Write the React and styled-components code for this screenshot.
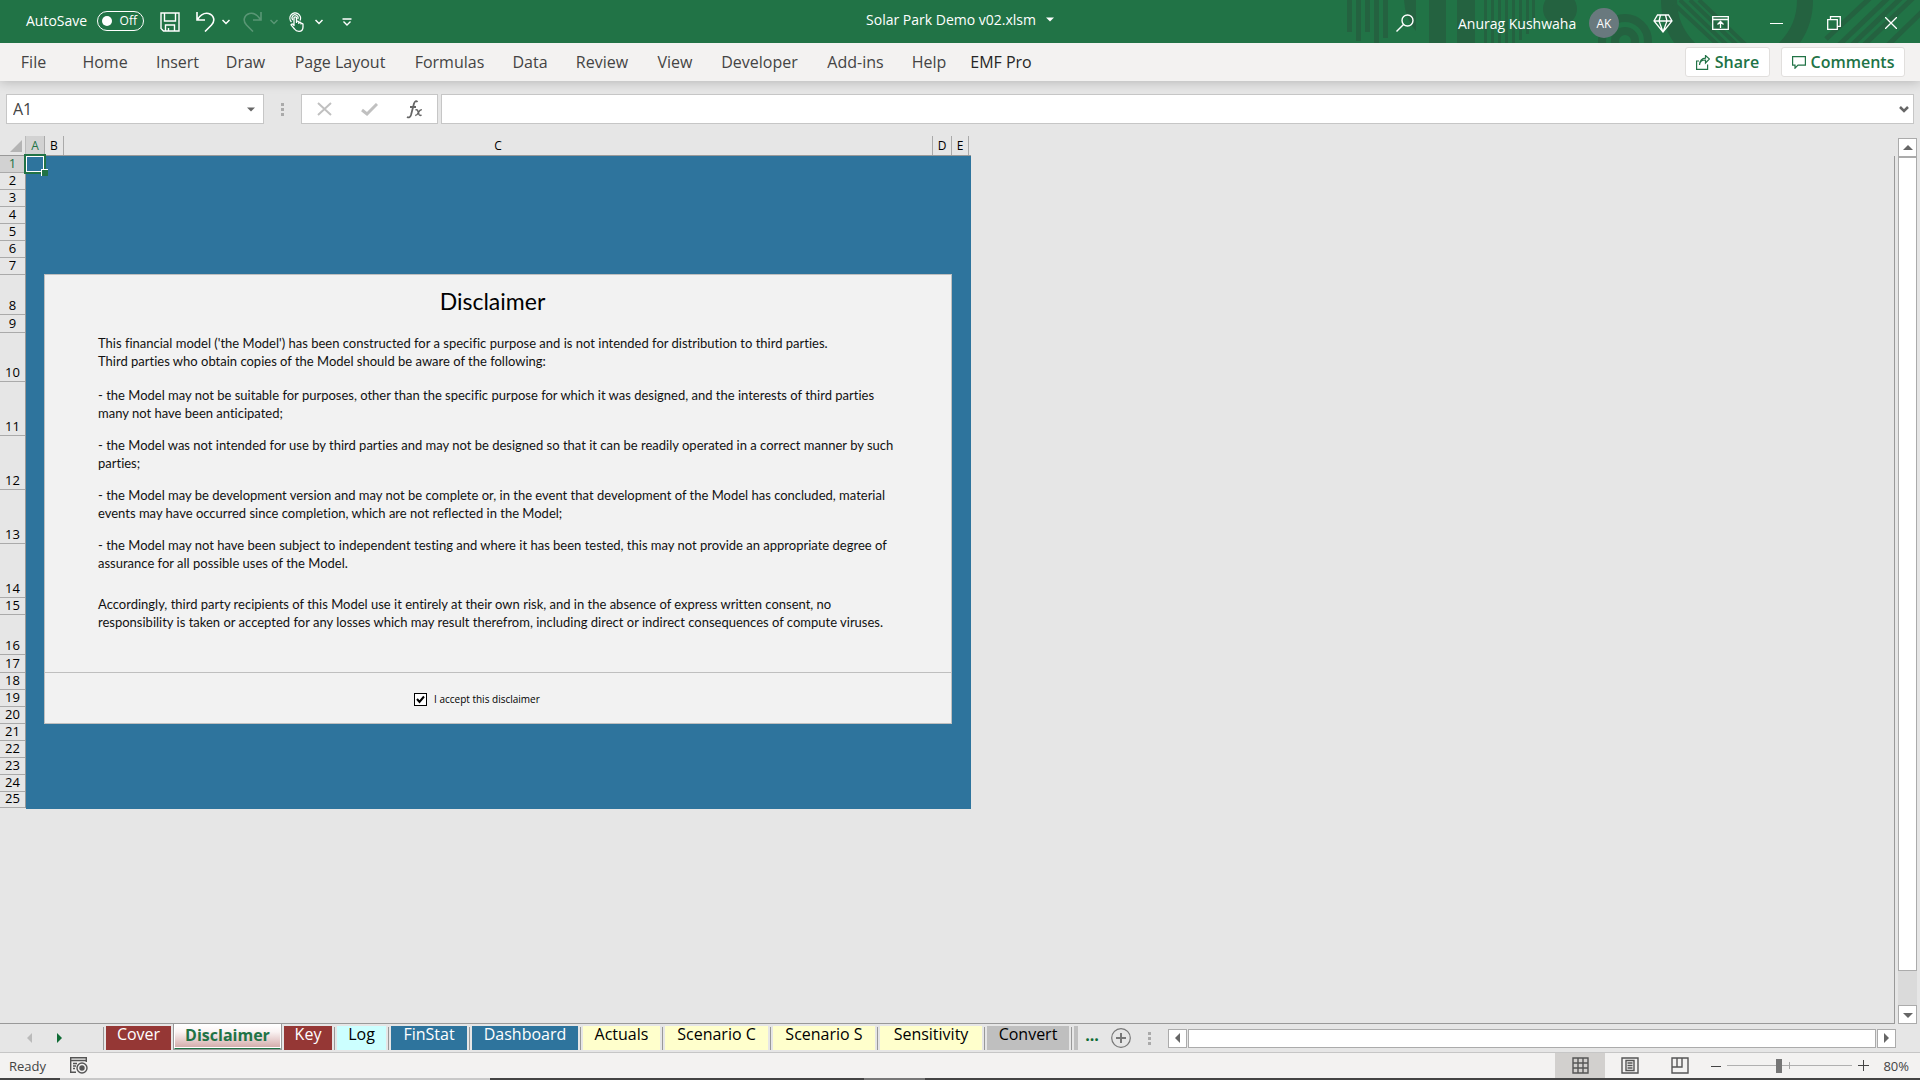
import React from 'react';
import styled, { createGlobalStyle, css } from 'styled-components';

const GlobalStyle = createGlobalStyle`
  * {
    box-sizing: border-box;
  }

  body {
    margin: 0;
    background: #e6e6e6;
    font-family: "Open Sans", "Noto Sans", sans-serif;
    color: #444;
  }

  button, input {
    font: inherit;
    color: inherit;
    margin: 0;
  }

  button {
    padding: 0;
    border: 0;
    background: none;
  }

  svg {
    display: block;
    flex: none;
  }
`;

const Page = styled.div`
  min-height: 100vh;
  display: flex;
  flex-direction: column;
`;

/* title bar */

const TitleBar = styled.header`
  position: relative;
  height: 43px;
  padding-bottom: 9px;
  display: grid;
  grid-template-columns: 1fr auto 1fr;
  align-items: center;
  background: #217346;
  color: #fff;
  font-size: 14px;
`;

const Pattern = styled.svg`
  position: absolute;
  top: 0;
  right: 0;
`;

const QuickAccess = styled.div`
  display: flex;
  align-items: center;
  padding-left: 26px;
`;

const AutoSave = styled.label`
  display: flex;
  align-items: center;
  gap: 8px;
  width: 134px;
  padding-top: 3px;
  white-space: nowrap;
`;

const Toggle = styled.button`
  width: 47px;
  height: 20px;
  margin-left: auto;
  margin-right: 16px;
  padding: 0 6px 0 4px;
  display: flex;
  align-items: center;
  justify-content: space-between;
  border: 1px solid #fff;
  border-radius: 10px;
  font-size: 12px;
  line-height: 18px;

  &::before {
    content: '';
    width: 10px;
    height: 10px;
    border-radius: 50%;
    background: #fff;
  }
`;

const BarButton = styled.button`
  width: ${props => props.$width}px;
  height: 34px;
  padding-top: 6px;
  display: flex;
  align-items: center;
  opacity: ${props => (props.disabled ? 0.25 : 1)};
`;

const FileName = styled.button`
  display: flex;
  align-items: center;
  gap: 10px;
  white-space: nowrap;
`;

const WindowTools = styled.div`
  position: relative;
  display: flex;
  align-items: center;
  justify-content: flex-end;
  padding-top: 8px;
`;

const UserName = styled.span`
  width: 131px;
  white-space: nowrap;
`;

const Avatar = styled.span`
  width: 30px;
  height: 30px;
  margin-right: 13px;
  display: grid;
  place-items: center;
  border-radius: 50%;
  background: #69797e;
  font-size: 12px;
`;

const ToolButton = styled.button`
  width: ${props => props.$width}px;
  height: 30px;
  display: grid;
  place-items: center;
`;

/* ribbon */

const Ribbon = styled.nav`
  height: 38px;
  padding: 0 15px 0 5px;
  display: flex;
  align-items: center;
  background: #f3f2f1;
  box-shadow: 0 1px 12px rgba(0, 0, 0, 0.22);
  font-size: 16px;
`;

const RibbonTab = styled.button`
  width: ${props => props.$width}px;
  height: 38px;
  white-space: nowrap;
  color: ${props => (props.$dark ? '#262626' : '#444')};
`;

const RibbonActions = styled.div`
  margin-left: auto;
  display: flex;
  gap: 11px;
`;

const ActionButton = styled.button`
  width: ${props => props.$width}px;
  height: 30px;
  display: flex;
  align-items: center;
  justify-content: center;
  gap: 5px;
  background: #fff;
  border: 1px solid #e1dfdd;
  border-radius: 3px;
  color: #217346;
  font-weight: 600;
`;

/* formula bar */

const FormulaBar = styled.div`
  height: 55px;
  padding: 13px 6px 0 6px;
  display: flex;
  align-items: flex-start;
`;

const box = css`
  height: 30px;
  display: flex;
  align-items: center;
  background: #fff;
  border: 1px solid #c6c6c6;
`;

const NameBox = styled.div`
  ${box}
  width: 258px;
  padding-right: 8px;
`;

const NameInput = styled.input`
  flex: 1;
  min-width: 0;
  padding: 0 6px;
  border: 0;
  outline: 0;
  background: none;
  font-size: 16px;
`;

const Grip = styled.div`
  width: 37px;
  height: 30px;
  display: grid;
  place-items: center;
`;

const FormulaButtons = styled.div`
  ${box}
  width: 137px;
  margin-right: 3px;
`;

const FormulaButton = styled.button`
  flex: 1;
  height: 28px;
  display: grid;
  place-items: center;
`;

const FormulaField = styled.div`
  ${box}
  flex: 1;
  padding-right: 4px;
`;

/* sheet */

const Workspace = styled.main`
  flex: 1;
  display: flex;
`;

const Sheet = styled.div`
  flex: 1;
  display: flex;
  flex-direction: column;
`;

const ColumnHeads = styled.div`
  height: 20px;
  display: flex;
`;

const HeadTrack = styled.div`
  display: flex;
  border-bottom: 1px solid #999;
  padding-right: ${props => props.$end || 0}px;
`;

const Corner = styled.button`
  width: 26px;
  display: flex;
  align-items: flex-end;
  justify-content: flex-end;
  padding: 0 3px 3px 0;
  border-right: 1px solid #bbb;
`;

const ColumnHead = styled.div`
  width: ${props => props.$width}px;
  border-right: 1px solid #aaa;
  text-align: center;
  font-size: 12px;
  line-height: 19px;
  color: ${props => (props.$active ? '#217346' : '#000')};
  background: ${props => (props.$active ? '#d2d2d2' : 'none')};
`;

const SheetBody = styled.div`
  flex: 1;
  display: flex;
  align-items: flex-start;
  border-right: 1px solid #999;
  border-bottom: 1px solid #999;
`;

const RowHeads = styled.div`
  width: 26px;
  border-right: 1px solid #999;
`;

const RowHead = styled.div`
  height: ${props => props.$height}px;
  padding-bottom: 2px;
  display: flex;
  align-items: flex-end;
  justify-content: center;
  border-bottom: 1px solid #aaa;
  font-size: 13px;
  line-height: 14px;
  color: ${props => (props.$active ? '#217346' : '#000')};
  background: ${props => (props.$active ? '#d2d2d2' : 'none')};
`;

const Canvas = styled.div`
  position: relative;
  padding: 118px 19px 85px 18px;
  background: #2e749d;
`;

/* outline round the selected cell, lies over the grid lines */
const Selection = styled.div`
  position: absolute;
  top: -2px;
  left: -2px;
  width: 22px;
  height: 20px;
  border: 2px solid #217346;

  &::before {
    content: '';
    position: absolute;
    inset: 0;
    border: 1px solid #fff;
  }

  &::after {
    content: '';
    position: absolute;
    right: -4px;
    bottom: -4px;
    width: 6px;
    height: 6px;
    background: #217346;
    border-top: 1px solid #fff;
    border-left: 1px solid #fff;
  }
`;

const Panel = styled.section`
  width: 908px;
  border: 1px solid #bfbfbf;
  background: #f2f2f2;
  color: #000;
`;

const PanelText = styled.div`
  height: 398px;
  padding: 11px 64px 0 53px;
  border-bottom: 1px solid #bfbfbf;
  font-family: Lato, sans-serif;
  font-size: 13px;
  line-height: 18px;
  font-variant-ligatures: none;
  white-space: nowrap;
  color: #111;
`;

const PanelTitle = styled.h1`
  margin: 0 0 18px;
  text-align: center;
  font-size: 23px;
  font-weight: 400;
  line-height: 30px;
  color: #000;
`;

const Paragraph = styled.p`
  margin: 0 0 ${props => props.$after || 14}px;
`;

const PanelFooter = styled.div`
  height: 50px;
  padding: 3px 0 0 369px;
  display: flex;
  align-items: center;
`;

const Accept = styled.label`
  display: flex;
  align-items: center;
  gap: 7px;
  font-size: 10px;
  line-height: 13px;
`;

const CheckWrap = styled.span`
  display: grid;
  place-items: center;

  & > * {
    grid-area: 1 / 1;
  }

  svg {
    pointer-events: none;
  }
`;

const Check = styled.input`
  appearance: none;
  width: 13px;
  height: 13px;
  border: 1px solid #000;
  background: #fff;

  &:not(:checked) + svg {
    display: none;
  }
`;

/* scroll bars */

const VScroll = styled.div`
  width: 25px;
  padding: 2px 3px 0 3px;
  display: flex;
  flex-direction: column;
`;

const ScrollButton = styled.button`
  width: 19px;
  height: 19px;
  flex: none;
  display: grid;
  place-items: center;
  background: #fff;
  border: 1px solid #ababab;
`;

const VTrack = styled.div`
  flex: 1;
  padding-bottom: 34px;
  display: flex;
  background: #dadada;
`;

const Thumb = styled.div`
  flex: 1;
  background: #fff;
  border: 1px solid #ababab;
`;

const HScroll = styled.div`
  flex: 1;
  display: flex;
  gap: 1px;
  height: 19px;
`;

/* sheet tabs */

const TabBar = styled.div`
  height: 29px;
  padding-right: 24px;
  display: flex;
  align-items: center;
  border-bottom: 1px solid #c6c6c6;
`;

const TabArrows = styled.div`
  width: 101px;
  padding-left: 20px;
  display: flex;
  gap: 10px;
`;

const TabArrow = styled.button`
  width: 20px;
  height: 20px;
  display: grid;
  place-items: center;
`;

const Tabs = styled.div`
  align-self: stretch;
  display: flex;
  align-items: flex-start;
`;

const Divider = styled.span`
  width: 1px;
  height: 23px;
  margin: 3px 2px 0;
  background: #999;
`;

const Tab = styled.button`
  width: ${props => props.$width}px;
  height: 24px;
  margin-top: 2px;
  padding-bottom: 7px;
  white-space: nowrap;
  font-size: 16px;
  line-height: 17px;
  background: ${props => props.$fill};
  color: ${props => props.$color};

  ${props => props.$active && css`
    height: 27px;
    margin: -1px 2px 0;
    padding: 0 0 2px;
    border: solid #fff;
    border-width: 2px 2px 1px;
    border-bottom: 2px solid #217346;
    font-weight: 700;
    outline: 1px solid #999;
    outline-offset: -1px;
    clip-path: inset(1px 0 0 0);
    box-shadow: inset 0 -1px #fff;
  `}
`;

const MoreTabs = styled.button`
  width: 28px;
  height: 20px;
  margin-right: 5px;
  padding-bottom: 6px;
  color: #0f6b35;
  font-size: 16px;
  font-weight: 700;
  line-height: 14px;
`;

/* status bar */

const StatusBar = styled.footer`
  height: 25px;
  padding: 0 11px 0 9px;
  display: flex;
  align-items: center;
  background: #f3f2f1;
  font-size: 13px;
`;

const Ready = styled.span`
  width: 61px;
`;

const Views = styled.div`
  margin-left: auto;
  display: flex;
`;

const ViewButton = styled.button`
  width: 50px;
  height: 25px;
  display: grid;
  place-items: center;
  background: ${props => (props.$active ? '#d2d0ce' : 'none')};
`;

const ZoomButton = styled.button`
  width: 22px;
  height: 25px;
  display: grid;
  place-items: center;
`;

const ZoomSlider = styled.input`
  appearance: none;
  width: 125px;
  height: 15px;
  background:
    linear-gradient(#a6a6a6, #a6a6a6) center / 1px 7px no-repeat,
    linear-gradient(#b0b0b0, #b0b0b0) center / 100% 1px no-repeat;

  &::-webkit-slider-thumb {
    appearance: none;
    width: 6px;
    height: 14px;
    background: #767676;
  }
`;

const ZoomLevel = styled.span`
  width: 35px;
  text-align: right;
`;

const TaskEdge = styled.div`
  height: 2px;
  display: flex;
  background: #444;
`;

const TaskEdgePart = styled.span`
  width: ${props => props.$width}px;
  background: ${props => props.$fill};
`;

const ribbonTabs = [
  ['File', 57],
  ['Home', 86],
  ['Insert', 59],
  ['Draw', 77],
  ['Page Layout', 112],
  ['Formulas', 107],
  ['Data', 54],
  ['Review', 90],
  ['View', 56],
  ['Developer', 113],
  ['Add-ins', 79],
  ['Help', 68],
];

const columns = [
  ['A', 19],
  ['B', 19],
  ['C', 869],
  ['D', 19],
  ['E', 17],
];

const rowHeights = [
  17, 17, 17, 17, 17, 17, 17, 40, 18, 49, 54, 54, 54, 54, 17, 40, 18,
  17, 17, 17, 17, 17, 17, 17, 16,
];

const red = '#953735';
const blue = '#2e749d';
const yellow = '#ffffcc';

const sheetTabs = [
  { name: 'Cover', width: 65, fill: red, color: '#fff', plain: true },
  {
    name: 'Disclaimer',
    width: 109,
    fill: 'linear-gradient(#fff, #faf3f3 30%, #d3a9a8)',
    color: '#217346',
    active: true,
    plain: true,
  },
  { name: 'Key', width: 48, fill: red, color: '#fff' },
  { name: 'Log', width: 49, fill: '#ccffff', color: '#000' },
  { name: 'FinStat', width: 76, fill: blue, color: '#fff' },
  { name: 'Dashboard', width: 106, fill: blue, color: '#fff' },
  { name: 'Actuals', width: 77, fill: yellow, color: '#000' },
  { name: 'Scenario C', width: 103, fill: yellow, color: '#000' },
  { name: 'Scenario S', width: 102, fill: yellow, color: '#000' },
  { name: 'Sensitivity', width: 102, fill: yellow, color: '#000' },
  { name: 'Convert', width: 82, fill: '#bfbfbf', color: '#000' },
];

const arrows = {
  up: 'M0 6 5 1l5 5z',
  down: 'M0 2h10L5 7z',
  left: 'M7 0v10L2 5z',
  right: 'M2 0v10l5-5z',
};

const Arrow = ({ dir, color = '#666', size = 10 }) => (
  <svg width={size} height={size} viewBox={dir === 'up' || dir === 'down' ? '0 -1 10 10' : '0 0 10 10'}>
    <path d={arrows[dir]} fill={color} />
  </svg>
);

const Chevron = () => (
  <svg width="8" height="6" viewBox="0 0 8 6" fill="none" stroke="#fff" strokeWidth="1.5">
    <path d="M.5 1 4 4.5 7.5 1" />
  </svg>
);

const Dots = () => (
  <svg width="3" height="13" fill="#aaa">
    <path d="M0 0h3v3H0zM0 5h3v3H0zM0 10h3v3H0z" />
  </svg>
);

const TitlePattern = () => (
  <Pattern width="580" height="43" viewBox="1340 0 580 43" fill="#246240" aria-hidden="true">
    <path d="M1347 0h5v32h-5zM1356 0h5v41h-5zM1365 0h5v32h-5zM1374 0h5v43h-5zM1383 0h5v38h-5z" />
    <path d="M1404 0h12v31q-11-12-12-31z" />
    <path d="M1429 0h17v43h-17zM1457 0h18v43h-18z" />
    <path d="M1484 0h3v43h-3zM1491 0h3v43h-3zM1498 0h3v43h-3zM1505 0h3v43h-3zM1512 0h3v43h-3zM1519 0h3v40h-3zM1526 0h3v34h-3zM1532 0h3v20h-3z" />
    <circle cx="1560" cy="9" r="17" />
    <g fill="none" stroke="#246240">
      <circle cx="1625" cy="41" r="23" strokeWidth="8" />
      <circle cx="1625" cy="41" r="10" strokeWidth="8" />
      <circle cx="1737" cy="0" r="68" strokeWidth="16" />
      <path strokeWidth="4" d="M1674 4l46 43M1680 0l48 46M1690 0l48 46M1699 0l48 46" />
      <path strokeWidth="5" d="M1826 39l44-41M1839 45l50-48M1852 45l50-48M1864 45l50-48M1886 47l40-39" />
    </g>
  </Pattern>
);

const SaveIcon = () => (
  <svg width="20" height="20" viewBox="0 0 20 20" fill="none" stroke="#fff" strokeWidth="1.4">
    <path d="M1 1h18v18H3.5L1 16.5zM4.5 1v8h11V1M5.5 19v-6h9v6M8.5 19v-3" />
  </svg>
);

const UndoIcon = ({ flip }) => (
  <svg width="19" height="20" viewBox="0 0 19 20" fill="none" stroke="#fff" strokeWidth="1.6">
    <path
      transform={flip ? 'matrix(-1 0 0 1 19 0)' : undefined}
      d="M1 0v8h8M1.500 7.500C5 2 9 .8 12.500 1.500 18 3 19.500 9 15.500 13L9 19.500"
    />
  </svg>
);

const TouchIcon = () => (
  <svg width="15" height="20" viewBox="0 0 15 20" fill="none" stroke="#fff" strokeWidth="1.3">
    <path d="M2.500 10A5.300 5.300 0 1 1 11 8.500M4 8A3 3 0 1 1 8.800 7" />
    <path d="M5 14V5.500q1.300-1.300 2.500 0V11M7.500 9.500q1.500-.8 2.300.3V12M9.800 10.500q1.500-.6 2.200.4V12.500M12 11.500q1.500-.4 2 .6V15q0 4.300-4 4.300-3 0-4.500-2.300L2 12.800q.8-1.300 2-.5L5 13.300" />
  </svg>
);

const App = () => (
  <>
    <GlobalStyle />
    <Page>
      <TitleBar>
        <TitlePattern />
        <QuickAccess>
          <AutoSave>
            AutoSave
            <Toggle aria-label="AutoSave">Off</Toggle>
          </AutoSave>
          <BarButton $width={36} aria-label="Save"><SaveIcon /></BarButton>
          <BarButton $width={26} aria-label="Undo"><UndoIcon /></BarButton>
          <BarButton $width={21} aria-label="Undo list"><Chevron /></BarButton>
          <BarButton $width={27} aria-label="Redo" disabled><UndoIcon flip /></BarButton>
          <BarButton $width={19} aria-label="Redo list" disabled><Chevron /></BarButton>
          <BarButton $width={26} aria-label="Touch mode"><TouchIcon /></BarButton>
          <BarButton $width={27} aria-label="Touch mode list"><Chevron /></BarButton>
          <BarButton $width={20} aria-label="Customize toolbar">
            <svg width="10" height="8" viewBox="0 0 10 8" fill="none" stroke="#fff" strokeWidth="1.4">
              <path d="M.5 1h9M1.500 3.500 5 7l3.500-3.500" />
            </svg>
          </BarButton>
        </QuickAccess>
        <FileName>
          Solar Park Demo v02.xlsm
          <Arrow dir="down" color="#fff" size={8} />
        </FileName>
        <WindowTools>
          <ToolButton $width={106} aria-label="Search">
            <svg width="18" height="18" viewBox="0 0 18 18" fill="none" stroke="#fff" strokeWidth="1.4">
              <circle cx="11.500" cy="6.500" r="5.500" />
              <path d="M7.500 10.500.5 17.500" />
            </svg>
          </ToolButton>
          <UserName>Anurag Kushwaha</UserName>
          <Avatar>AK</Avatar>
          <ToolButton $width={62} aria-label="Premium">
            <svg width="20" height="19" viewBox="0 0 20 19" fill="none" stroke="#fff" strokeWidth="1.3">
              <path d="M4.500 1h11L19 7l-9 11L1 7zM1 7h18M7.500 1 6 7l4 11 4-11-1.500-6" />
            </svg>
          </ToolButton>
          <ToolButton $width={52} aria-label="Ribbon display options">
            <svg width="17" height="14" viewBox="0 0 17 14" fill="none" stroke="#fff" strokeWidth="1.3">
              <path d="M.7.7h15.600v12.600H.7zM.7 3.500h15.600M8.500 12V6M5.500 8.500l3-3 3 3" />
            </svg>
          </ToolButton>
          <ToolButton $width={60} aria-label="Minimize">
            <svg width="13" height="13" stroke="#fff"><path d="M0 6.500h13" /></svg>
          </ToolButton>
          <ToolButton $width={56} aria-label="Restore">
            <svg width="14" height="14" viewBox="0 0 14 14" fill="none" stroke="#fff" strokeWidth="1.300">
              <path d="M.7 3.700h9.600v9.600H.7zM3.500 3.500V.7h9.800v9.600h-2.800" />
            </svg>
          </ToolButton>
          <ToolButton $width={58} aria-label="Close">
            <svg width="12" height="12" stroke="#fff" strokeWidth="1.300"><path d="m0 0 12 12M12 0 0 12" /></svg>
          </ToolButton>
        </WindowTools>
      </TitleBar>

      <Ribbon>
        {ribbonTabs.map(([name, width]) => (
          <RibbonTab key={name} $width={width}>{name}</RibbonTab>
        ))}
        <RibbonTab $width={76} $dark>EMF Pro</RibbonTab>
        <RibbonActions>
          <ActionButton $width={85}>
            <svg width="14" height="15" viewBox="0 0 14 15" fill="none" stroke="#217346" strokeWidth="1.200">
              <path d="M3 6H.6v8.400h11V9.500M3.500 10q.5-5 6-5V8l4-4-4-3.500v2.700Q4 3.500 3.500 10z" />
            </svg>
            Share
          </ActionButton>
          <ActionButton $width={124}>
            <svg width="14" height="13" viewBox="0 0 14 13" fill="none" stroke="#217346" strokeWidth="1.200">
              <path d="M.6.6h12.800v8.600H6L3 12.200v-3H.6z" />
            </svg>
            Comments
          </ActionButton>
        </RibbonActions>
      </Ribbon>

      <FormulaBar>
        <NameBox>
          <NameInput aria-label="Name box" defaultValue="A1" />
          <Arrow dir="down" size={8} />
        </NameBox>
        <Grip><Dots /></Grip>
        <FormulaButtons>
          <FormulaButton aria-label="Cancel">
            <svg width="15" height="14" stroke="#c0c0c0" strokeWidth="2"><path d="m1 1 13 12M14 1 1 13" /></svg>
          </FormulaButton>
          <FormulaButton aria-label="Enter">
            <svg width="17" height="13" fill="none" stroke="#c0c0c0" strokeWidth="3"><path d="m1 7 5 4L16 1" /></svg>
          </FormulaButton>
          <FormulaButton aria-label="Insert function">
            <svg width="17" height="19" viewBox="0 0 17 19" fill="none" stroke="#666" strokeWidth="1.800">
              <path d="M11.500 2Q9.500-.3 8 3.500L5 15q-1.200 3.500-4 2M4 7h6" />
              <path d="M9.500 10q2-1 2.500 1.500l1 3q.7 1.500 2.500.5M15.800 9.800q-1.800-.3-3.300 2.700t-3.300 3" strokeWidth="1.500" />
            </svg>
          </FormulaButton>
        </FormulaButtons>
        <FormulaField>
          <NameInput aria-label="Formula" />
          <svg width="10" height="7" fill="none" stroke="#666" strokeWidth="2.500"><path d="m1 1 4 4 4-4" /></svg>
        </FormulaField>
      </FormulaBar>

      <Workspace>
        <Sheet>
          <ColumnHeads>
            <HeadTrack>
              <Corner aria-label="Select all">
                <svg width="12" height="12" fill="#b4b4b4"><path d="M12 0v12H0z" /></svg>
              </Corner>
            </HeadTrack>
            <HeadTrack $end={2}>
              {columns.map(([name, width]) => (
                <ColumnHead key={name} $width={width} $active={name === 'A'}>{name}</ColumnHead>
              ))}
            </HeadTrack>
          </ColumnHeads>
          <SheetBody>
            <RowHeads>
              {rowHeights.map((height, i) => (
                <RowHead key={i} $height={height} $active={i === 0}>{i + 1}</RowHead>
              ))}
            </RowHeads>
            <Canvas>
              <Selection />
              <Panel>
                <PanelText>
                  <PanelTitle>Disclaimer</PanelTitle>
                  <Paragraph $after={16}>
                    This financial model ('the Model') has been constructed for a specific purpose and is not intended for distribution to third parties.<br />
                    Third parties who obtain copies of the Model should be aware of the following:
                  </Paragraph>
                  <Paragraph>
                    - the Model may not be suitable for purposes, other than the specific purpose for which it was designed, and the interests of third parties<br />
                    many not have been anticipated;
                  </Paragraph>
                  <Paragraph>
                    - the Model was not intended for use by third parties and may not be designed so that it can be readily operated in a correct manner by such<br />
                    parties;
                  </Paragraph>
                  <Paragraph>
                    - the Model may be development version and may not be complete or, in the event that development of the Model has concluded, material<br />
                    events may have occurred since completion, which are not reflected in the Model;
                  </Paragraph>
                  <Paragraph $after={23}>
                    - the Model may not have been subject to independent testing and where it has been tested, this may not provide an appropriate degree of<br />
                    assurance for all possible uses of the Model.
                  </Paragraph>
                  <Paragraph>
                    Accordingly, third party recipients of this Model use it entirely at their own risk, and in the absence of express written consent, no<br />
                    responsibility is taken or accepted for any losses which may result therefrom, including direct or indirect consequences of compute viruses.
                  </Paragraph>
                </PanelText>
                <PanelFooter>
                  <Accept>
                    <CheckWrap>
                      <Check type="checkbox" defaultChecked />
                      <svg width="9" height="9" fill="none" stroke="#000" strokeWidth="2"><path d="m1 4 2.500 3L8 1.500" /></svg>
                    </CheckWrap>
                    I accept this disclaimer
                  </Accept>
                </PanelFooter>
              </Panel>
            </Canvas>
          </SheetBody>
        </Sheet>
        <VScroll>
          <ScrollButton aria-label="Scroll up"><Arrow dir="up" /></ScrollButton>
          <VTrack><Thumb /></VTrack>
          <ScrollButton aria-label="Scroll down"><Arrow dir="down" /></ScrollButton>
        </VScroll>
      </Workspace>

      <TabBar>
        <TabArrows>
          <TabArrow aria-label="Previous sheet"><Arrow dir="left" color="#bbb" /></TabArrow>
          <TabArrow aria-label="Next sheet"><Arrow dir="right" color="#0f6b35" /></TabArrow>
        </TabArrows>
        <Tabs>
          <Divider />
          {sheetTabs.map(tab => (
            <React.Fragment key={tab.name}>
              <Tab $width={tab.width} $fill={tab.fill} $color={tab.color} $active={tab.active}>
                {tab.name}
              </Tab>
              {!tab.plain && <Divider />}
            </React.Fragment>
          ))}
          <Tab $width={4} $fill="#bfbfbf" aria-label="Next tab" />
        </Tabs>
        <MoreTabs>...</MoreTabs>
        <TabArrow aria-label="New sheet">
          <svg width="20" height="20" viewBox="0 0 20 20" fill="none" stroke="#777">
            <circle cx="10" cy="10" r="9.300" strokeWidth="1.200" />
            <path d="M10 5v10M5 10h10" strokeWidth="2" />
          </svg>
        </TabArrow>
        <Grip><Dots /></Grip>
        <HScroll>
          <ScrollButton aria-label="Scroll left"><Arrow dir="left" /></ScrollButton>
          <Thumb />
          <ScrollButton aria-label="Scroll right"><Arrow dir="right" /></ScrollButton>
        </HScroll>
      </TabBar>

      <StatusBar>
        <Ready>Ready</Ready>
        <svg width="18" height="17" viewBox="0 0 18 17" fill="none" stroke="#555" strokeWidth="1.400">
          <path d="M6 15.300H.7V.7h15.600V5M.7 3.500h15.600M3 6.500h4M3 9h3M3 11.500h2" />
          <circle cx="12" cy="11" r="5" />
          <circle cx="12" cy="11" r="2" fill="#555" />
        </svg>
        <Views>
          <ViewButton $active aria-label="Normal view">
            <svg width="17" height="17" fill="none" stroke="#555" strokeWidth="1.400">
              <path d="M1 1h15v15H1zM6 1v15M11 1v15M1 6h15M1 11h15" />
            </svg>
          </ViewButton>
          <ViewButton aria-label="Page layout view">
            <svg width="18" height="17" fill="none" stroke="#555" strokeWidth="1.400">
              <path d="M1 1h16v15H1zM5 3.500h8v10H5zM6.500 6h5M6.500 8.500h5M6.500 11h5" />
            </svg>
          </ViewButton>
          <ViewButton aria-label="Page break preview">
            <svg width="18" height="17" fill="none" stroke="#555" strokeWidth="1.400">
              <path d="M1 1h16v15H1zM1 10h10V1M6 1v9" />
            </svg>
          </ViewButton>
        </Views>
        <ZoomButton aria-label="Zoom out">
          <svg width="10" height="10" stroke="#444"><path d="M0 5.500h10" /></svg>
        </ZoomButton>
        <ZoomSlider type="range" min="0" max="100" defaultValue="41" aria-label="Zoom" />
        <ZoomButton aria-label="Zoom in">
          <svg width="11" height="11" stroke="#444"><path d="M0 5.500h11M5.500 0v11" /></svg>
        </ZoomButton>
        <ZoomLevel>80%</ZoomLevel>
      </StatusBar>
      <TaskEdge>
        <TaskEdgePart $width={60} $fill="#444" />
        <TaskEdgePart $width={430} $fill="#c8c8c8" />
        <TaskEdgePart $width={374} $fill="#444" />
        <TaskEdgePart $width={61} $fill="#777" />
      </TaskEdge>
    </Page>
  </>
);

export default App;
